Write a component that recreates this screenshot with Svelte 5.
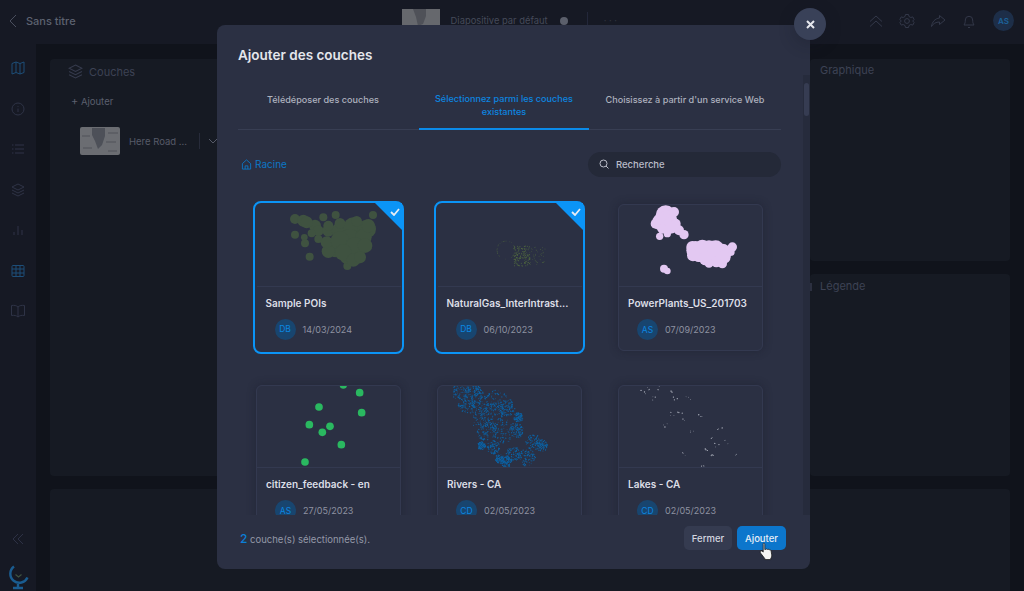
<script>
  // small seeded generator so the scattered map dots stay put between runs
  function rng(seed) {
    let s = seed;
    return () => {
      s = (s * 16807) % 2147483647;
      return s / 2147483647;
    };
  }

  const scale = (list, dx, dy) =>
    list.map(([x, y, r]) => ({ x: x / 3 - dx, y: y / 3 - dy, r: r / 3 }));

  const poi = scale(
    [
      [165, 75, 15], [190, 80, 18], [250, 70, 12], [287, 63, 12], [399, 63, 12],
      [165, 122, 12], [193, 130, 10], [195, 148, 12], [209, 188, 12], [322, 216, 12],
      [225, 95, 18], [200, 85, 18], [235, 110, 16], [265, 110, 18], [300, 110, 25],
      [340, 100, 30], [380, 105, 28], [330, 140, 35], [290, 160, 30], [265, 172, 20],
      [350, 185, 25], [320, 190, 20], [235, 135, 12], [370, 130, 25], [260, 145, 18],
      [300, 140, 28], [345, 160, 30], [375, 155, 22], [300, 88, 16], [350, 82, 16],
      [385, 95, 20], [265, 95, 15], [310, 175, 25], [340, 198, 20], [215, 118, 12],
      [360, 190, 18]
    ],
    13, 6
  );

  const plants = scale(
    [
      [200, 70, 30], [205, 85, 30], [185, 90, 25], [225, 60, 15], [170, 95, 15],
      [215, 100, 25], [240, 115, 15], [255, 128, 14], [182, 133, 11], [205, 125, 11],
      [190, 110, 15], [230, 95, 15], [290, 175, 28], [330, 175, 30], [330, 190, 32],
      [300, 182, 28], [370, 190, 25], [370, 180, 25], [400, 165, 14], [300, 190, 20],
      [340, 200, 20], [370, 215, 14], [330, 215, 12], [395, 180, 12], [280, 165, 18],
      [282, 190, 18], [310, 165, 22], [350, 170, 25], [375, 195, 20], [320, 200, 20],
      [352, 210, 16], [195, 230, 12], [205, 237, 10]
    ],
    16, 8
  );

  const feedback = scale(
    [
      [310, 33, 11], [359, 56, 11.5], [237, 99, 11.5], [365, 116, 11.5], [208, 152, 11.5],
      [270, 157, 11.5], [247, 175, 11.5], [304, 212, 11.5], [195, 264, 11.5]
    ],
    13, 7
  );

  function gasDots() {
    const r = rng(77);
    const dots = [];
    for (let i = 0; i < 120; i++) {
      dots.push({ x: 80 + r() * 16, y: 46 + r() * 20, r: 0.5 });
    }
    for (let i = 0; i < 50; i++) {
      dots.push({ x: 90 + r() * 21, y: 47 + r() * 18, r: 0.4 });
    }
    // the dotted rings on the west side
    for (let i = 0; i < 36; i++) {
      const a = r() * Math.PI * 2;
      dots.push({ x: 72 + Math.cos(a) * 9, y: 50 + Math.sin(a) * 9, r: 0.35 });
    }
    return dots;
  }

  function riverDots() {
    const r = rng(4242);
    const clusters = [
      [665, 55, 28], [700, 45, 24], [680, 90, 26], [720, 80, 30], [770, 80, 32], [720, 130, 32],
      [760, 120, 36], [800, 100, 26], [740, 170, 30], [790, 170, 36], [760, 220, 20], [830, 170, 22],
      [880, 205, 24], [905, 215, 18], [860, 250, 26], [800, 265, 16], [820, 240, 22], [725, 215, 12],
      [835, 130, 14], [780, 255, 14]
    ];
    const dots = [];
    for (const [cx, cy, spread] of clusters) {
      for (let i = 0; i < 90; i++) {
        const a = r() * Math.PI * 2;
        const d = Math.sqrt(r()) * spread;
        dots.push({
          x: (cx + Math.cos(a) * d) / 3 - 194,
          y: (cy + Math.sin(a) * d) / 3 - 7,
          r: 0.3 + r() * 0.45
        });
      }
    }
    return dots;
  }

  function lakeDots() {
    const r = rng(913);
    const spots = [
      [130, 55], [145, 45], [165, 75], [180, 42], [212, 50], [225, 75], [265, 75], [215, 120],
      [240, 120], [250, 135], [300, 125], [275, 170], [195, 155], [340, 190], [378, 205], [350, 215],
      [405, 245], [320, 228], [340, 243], [250, 243], [310, 270], [360, 165]
    ];
    const dots = [];
    for (const [cx, cy] of spots) {
      for (let i = 0; i < 3; i++) {
        dots.push({
          x: (cx + (r() - 0.5) * 14) / 3 - 15,
          y: (cy + (r() - 0.5) * 14) / 3 - 7,
          r: 0.3 + r() * 0.4
        });
      }
    }
    return dots;
  }

  const cards = [
    { name: "Sample POIs", who: "DB", date: "14/03/2024", on: true, dots: poi, color: "#3f5240" },
    { name: "NaturalGas_InterIntrast...", who: "DB", date: "06/10/2023", on: true, dots: gasDots(), color: "#50683f" },
    { name: "PowerPlants_US_201703", who: "AS", date: "07/09/2023", on: false, dots: plants, color: "#e3c8f2" },
    { name: "citizen_feedback - en", who: "AS", date: "27/05/2023", on: false, dots: feedback, color: "#2ab860" },
    { name: "Rivers - CA", who: "CD", date: "02/05/2023", on: false, dots: riverDots(), color: "#0c62a4" },
    { name: "Lakes - CA", who: "CD", date: "02/05/2023", on: false, dots: lakeDots(), color: "#b4b8c4" }
  ];

  const tabs = [
    { label: "Télédéposer des couches", width: 170 },
    { label: "Sélectionnez parmi les couches existantes", width: 170, active: true },
    { label: "Choisissez à partir d'un service Web", width: 192 }
  ];
</script>

<div class="app">
  <header class="topbar">
    <svg class="back" width="10" height="14" viewBox="0 0 10 14"><path d="M8 1 2 7l6 6" /></svg>
    <span class="doc-title">Sans titre</span>
    <div class="slide">
      <svg class="slide-thumb" width="38" height="20" viewBox="0 0 38 20">
        <rect width="38" height="20" fill="#66686d" />
        <path d="M11 0h13v7l-3 8-5 2-2-9z" fill="#4f5158" />
      </svg>
      <span>Diapositive par défaut</span>
      <i class="slide-dot"></i>
      <i class="slide-sep"></i>
      <span class="slide-more">· · ·</span>
    </div>
    <div class="top-actions">
      <svg width="16" height="16" viewBox="0 0 16 16"><path d="M2 8.500 8 3l6 5.500M2 13.500 8 8l6 5.500" /></svg>
      <svg width="16" height="16" viewBox="0 0 16 16"><path d="M6.500 1.500h3l.5 2 1.800 1 2-.6 1.300 2.600-1.400 1.500 1.400 1.500-1.300 2.600-2-.6-1.800 1-.5 2h-3l-.5-2-1.800-1-2 .6L.9 9.500 2.300 8 .9 6.500l1.300-2.600 2 .6 1.800-1z" /><circle cx="8" cy="8" r="2.400" /></svg>
      <svg width="16" height="16" viewBox="0 0 16 16"><path d="M9.500 2.500 15 7l-5.500 4.500V9C6 9 3 10.500 1.500 13.500 2 9 5 5.500 9.500 5z" /></svg>
      <svg width="16" height="16" viewBox="0 0 16 16"><path d="M3 12c1-1.500 1.300-2.500 1.300-5a3.700 3.700 0 0 1 7.400 0c0 2.500.3 3.500 1.300 5zM7 14.500h2" /></svg>
      <span class="top-avatar">AS</span>
    </div>
  </header>

  <div class="main">
    <nav class="sidebar">
      <div class="side-icons">
        <svg class="blue" width="14" height="14" viewBox="0 0 14 14"><path d="M1 2.500 5 1l4 1.500L13 1v10.500L9 13l-4-1.500L1 13zM5 1v10.500M9 2.500V13" /></svg>
        <svg width="14" height="14" viewBox="0 0 14 14"><circle cx="7" cy="7" r="6" /><path d="M7 6.500V10M7 4v.8" /></svg>
        <svg width="14" height="14" viewBox="0 0 14 14"><path d="M1 3h1.500M4 3h9M1 7h1.500M4 7h9M1 11h1.500M4 11h9" /></svg>
        <svg width="14" height="14" viewBox="0 0 14 14"><path d="M7 1 13 4 7 7 1 4zM1 7l6 3 6-3M1 10l6 3 6-3" /></svg>
        <svg width="14" height="14" viewBox="0 0 14 14"><path d="M3 12V9M7 12V3M11 12V7" /></svg>
        <svg class="blue" width="14" height="14" viewBox="0 0 14 14"><rect x="1" y="1.500" width="12" height="11" rx="1" /><path d="M1 5h12M1 9h12M5 1.500v11M9 1.500v11" /></svg>
        <svg width="16" height="14" viewBox="0 0 16 14"><path d="M8 3C6.500 1.500 4 1 1.500 1.500v10C4 11 6.500 11.500 8 13c1.500-1.500 4-2 6.500-1.500v-10C12 1 9.500 1.500 8 3zM8 3v10" /></svg>
      </div>
      <div class="side-foot">
        <svg width="12" height="12" viewBox="0 0 12 12"><path d="M6 1 1 6l5 5M11 1 6 6l5 5" /></svg>
        <svg class="logo" width="22" height="26" viewBox="0 0 22 26">
          <path d="M7 2.500a9 9 0 1 0 13.500 11" />
          <path d="M11 20v3M6 24h10" />
          <path class="logo-tick" d="m8.500 10.500 3 2.500 3-2.500" />
        </svg>
      </div>
    </nav>

    <div class="content">
      <section class="panel layers">
        <div class="layers-head">
          <svg width="15" height="15" viewBox="0 0 14 14"><path d="M7 1 13 4 7 7 1 4zM1 7l6 3 6-3M1 10l6 3 6-3" /></svg>
          <h2>Couches</h2>
        </div>
        <div class="layers-add"><b>+</b> <span>Ajouter</span></div>
        <div class="layer-row">
          <svg class="layer-thumb" width="40" height="28" viewBox="0 0 40 28">
            <rect width="40" height="28" rx="2" fill="#6b6d72" />
            <path d="M12 1h13v8l-3 9-4 4-3-8-3-6z" fill="#4d5058" />
            <path d="M2 9h8M28 6h10M3 21h9M26 15h10M28 24h9" stroke="#515359" stroke-width="1.200" fill="none" />
          </svg>
          <span class="layer-name">Here Road ...</span>
          <i class="layer-sep"></i>
          <svg class="layer-chev" width="10" height="8" viewBox="0 0 10 8"><path d="m1 2 4 4 4-4" /></svg>
        </div>
      </section>
      <div class="side-panels">
        <section class="panel"><h2>Graphique</h2></section>
        <section class="panel legend"><i class="grip"></i><h2>Légende</h2></section>
      </div>
      <section class="panel wide"></section>
    </div>
  </div>

  <div class="modal">
    <h1>Ajouter des couches</h1>

    <div class="scroll">
      <div class="scroll-body">
        <div class="tabs">
          {#each tabs as tab}
            <div class="tab" class:active={tab.active} style="width: {tab.width}px">{tab.label}</div>
          {/each}
        </div>

        <div class="crumbs">
          <div class="root">
            <svg width="11" height="11" viewBox="0 0 12 12"><path d="M1.500 11V5L6 1l4.500 4v6zM4.500 11V7.500h3V11" /></svg>
            Racine
          </div>
          <div class="search">
            <svg width="10" height="10" viewBox="0 0 10 10"><circle cx="4.500" cy="4.500" r="3.500" /><path d="m7 7 2.500 2.500" /></svg>
            Recherche
          </div>
        </div>

        <div class="grid">
          {#each cards as card}
            <article class="card" class:on={card.on}>
              <div class="card-inner">
                <svg class="thumb" viewBox="4 4 143 82" width="143" height="82">
                  {#each card.dots as d}
                    <circle cx={d.x} cy={d.y} r={d.r} fill={card.color} />
                  {/each}
                </svg>
                <div class="card-info">
                  <div class="card-name">{card.name}</div>
                  <div class="card-meta">
                    <span class="avatar">{card.who}</span>
                    <span>{card.date}</span>
                  </div>
                </div>
              </div>
              {#if card.on}
                <div class="corner">
                  <svg width="10" height="8" viewBox="0 0 10 8"><path d="m1 4 3 3 5-6" /></svg>
                </div>
              {/if}
            </article>
          {/each}
        </div>
      </div>
      <div class="scrollbar"><div class="scroll-thumb"></div></div>
    </div>

    <footer class="modal-foot">
      <div class="count"><b>2</b> couche(s) sélectionnée(s).</div>
      <div class="buttons">
        <button class="btn">Fermer</button>
        <button class="btn primary">Ajouter</button>
      </div>
    </footer>

    <button class="close" aria-label="Fermer">
      <svg width="9" height="9" viewBox="0 0 9 9"><path d="m1 1 7 7M8 1 1 8" /></svg>
    </button>

    <svg class="cursor" width="15" height="19" viewBox="0 0 15 19">
      <path d="M4.500 1.200c.8 0 1.300.6 1.300 1.400v5l.9-.2c.5-.5 1.400-.4 1.800.1.600-.4 1.500-.2 1.800.4.700-.3 1.600.1 1.800.9l.6 4c.2 1.500-.2 2.700-1 3.800v1H5.800v-1L2.300 12c-.7-.9-1.200-1.700-1-2.400.3-.8 1.300-.9 2-.3l.9.800V2.600c0-.8 0-1.400.3-1.400z" />
    </svg>
  </div>
</div>

<style>
  :global(body) {
    margin: 0;
    background: #10131b;
  }

  .app {
    position: relative;
    display: flex;
    flex-direction: column;
    width: 1024px;
    height: 591px;
    overflow: hidden;
    background: #10131b;
    font-family: Inter, "Liberation Sans", sans-serif;
    color: #c9ccd6;
  }

  .app svg {
    fill: none;
    stroke: currentColor;
    stroke-width: 1;
  }

  .topbar {
    display: flex;
    align-items: center;
    flex: 0 0 44px;
    padding: 0 10px 3px 8px;
    background: #161924;
    color: #565b6b;
    box-sizing: border-box;
  }

  .back {
    color: #4a4f5e;
  }

  .doc-title {
    margin-left: 8px;
    font-size: 11px;
    font-weight: 500;
    color: #5d6270;
  }

  .slide {
    display: flex;
    align-items: center;
    margin-left: 326px;
    font-size: 9.400px;
    color: #454a59;
  }

  .app .slide-thumb {
    margin-right: 11px;
    margin-top: -4px;
    stroke: none;
  }

  .slide-dot {
    width: 8px;
    height: 8px;
    margin-left: 12px;
    border-radius: 50%;
    background: #5b5f6b;
  }

  .slide-sep {
    width: 1px;
    height: 18px;
    margin: 0 16px 0 19px;
    background: #23273a;
  }

  .slide-more {
    color: #30343f;
  }

  .top-actions {
    display: flex;
    align-items: center;
    gap: 15px;
    margin-left: auto;
    color: #333849;
  }

  .top-avatar {
    display: grid;
    place-items: center;
    width: 21px;
    height: 21px;
    margin-left: 1px;
    border-radius: 50%;
    background: #1d2e48;
    color: #1c6199;
    font-size: 8px;
    font-weight: 600;
  }

  .main {
    display: flex;
    flex: 1;
    min-height: 0;
  }

  .sidebar {
    display: flex;
    flex-direction: column;
    justify-content: space-between;
    align-items: center;
    flex: 0 0 36px;
    padding: 17px 0 1px;
    background: #161924;
    box-sizing: border-box;
    color: #2e3346;
  }

  .side-icons {
    display: flex;
    flex-direction: column;
    align-items: center;
    gap: 26.500px;
  }

  .side-icons .blue {
    color: #1d4e78;
  }

  .side-foot {
    display: flex;
    flex-direction: column;
    align-items: center;
    gap: 19px;
    color: #2d3145;
  }

  .app .logo {
    color: #1a5c90;
    stroke-width: 2.400;
  }

  .app .logo-tick {
    color: #3f5240;
    stroke-width: 1.200;
  }

  .content {
    display: grid;
    grid-template-columns: 1fr 200px;
    grid-template-rows: 417px 1fr;
    gap: 13px;
    flex: 1;
    padding: 15px 14px 0;
    min-width: 0;
  }

  .panel {
    border-radius: 4px;
    background: #161a23;
  }

  .panel h2 {
    margin: 0;
    padding: 4px 10px;
    font-size: 11px;
    font-weight: 400;
    color: #3d4254;
  }

  .legend {
    position: relative;
    padding-top: 1px;
  }

  .grip {
    position: absolute;
    top: 9px;
    left: 0;
    width: 2px;
    height: 8px;
    background: #2c3040;
  }

  .wide {
    grid-column: 1 / 3;
    border-radius: 4px 4px 0 0;
  }

  .layers {
    padding-left: 18px;
  }

  .layers-head {
    display: flex;
    align-items: center;
    gap: 6px;
    height: 25px;
    color: #363b4d;
  }

  .layers .layers-head h2 {
    padding: 0;
    color: #3d4254;
  }

  .layers-add {
    margin: 10px 0 0 3px;
    font-size: 9.500px;
    color: #5b5f6d;
  }

  .layers-add b {
    font-size: 11px;
    font-weight: 400;
  }

  .layer-row {
    display: flex;
    align-items: center;
    margin: 19px 0 0 12px;
    font-size: 9.500px;
    color: #565a68;
  }

  .app .layer-thumb {
    stroke: none;
  }

  .layer-name {
    margin-left: 9px;
  }

  .layer-sep {
    width: 1px;
    height: 16px;
    margin: 0 8px 0 12px;
    background: #272b3a;
  }

  .layer-chev {
    color: #565a68;
  }

  .side-panels {
    display: flex;
    flex-direction: column;
    gap: 13px;
  }

  .side-panels .panel {
    flex: 1;
  }

  .modal {
    position: absolute;
    top: 25px;
    left: 217px;
    display: flex;
    flex-direction: column;
    width: 593px;
    height: 544px;
    border-radius: 8px;
    background: #2b3043;
  }

  h1 {
    flex: 0 0 50px;
    margin: 0;
    padding: 22px 0 0 21px;
    box-sizing: border-box;
    font-size: 13.500px;
    line-height: 17px;
    font-weight: 600;
    color: #e4e6ec;
  }

  .scroll {
    display: flex;
    flex: 1;
    min-height: 0;
  }

  .scroll-body {
    flex: 1;
    min-width: 0;
    padding: 0 22px 0 21px;
    overflow: hidden;
  }

  .scrollbar {
    flex: 0 0 7px;
    padding-top: 8px;
    background: #262b3c;
  }

  .scroll-thumb {
    width: 5px;
    height: 33px;
    margin: 0 auto;
    border-radius: 3px;
    background: #363c52;
  }

  .tabs {
    display: flex;
    height: 44px;
    margin-top: 10px;
    border-bottom: 1px solid #383e53;
  }

  .tab {
    display: flex;
    align-items: center;
    justify-content: center;
    padding: 0 12px 16px;
    box-sizing: border-box;
    margin-bottom: -1px;
    font-size: 9.100px;
    line-height: 13px;
    font-weight: 500;
    text-align: center;
    color: #aeb2bf;
  }

  .tab.active {
    margin-left: 11px;
    padding-bottom: 4px;
    border-bottom: 2px solid #0b8ae8;
    color: #0c86e0;
  }

  .crumbs {
    display: flex;
    align-items: center;
    justify-content: space-between;
    margin-top: 21px;
    height: 26px;
  }

  .root {
    display: flex;
    align-items: center;
    gap: 3px;
    padding-left: 3px;
    font-size: 10px;
    color: #0c77c6;
  }

  .search {
    display: flex;
    align-items: center;
    gap: 7px;
    width: 193px;
    height: 25px;
    padding-left: 11px;
    box-sizing: border-box;
    border-radius: 13px;
    background: #242938;
    font-size: 9.500px;
    font-weight: 500;
    color: #b9bcc8;
  }

  .grid {
    display: grid;
    grid-template-columns: repeat(3, 151px);
    column-gap: 30px;
    row-gap: 28px;
    margin: 24px 0 0 15px;
  }

  .card {
    position: relative;
    height: 153px;
    padding: 3px;
    box-sizing: border-box;
    border-radius: 8px;
  }

  .card.on {
    padding: 0.500px;
    border: 2.500px solid #0b94f6;
  }

  .card-inner {
    display: flex;
    flex-direction: column;
    height: 100%;
    box-sizing: border-box;
    border: 1px solid #333950;
    border-radius: 6px;
    overflow: hidden;
    box-shadow: 0 0 8px rgba(24, 27, 40, 0.45);
  }

  .card.on .card-inner {
    border-color: transparent;
    box-shadow: none;
  }

  .app .thumb {
    display: block;
    flex: 0 0 82px;
    margin-top: -1px;
    stroke: none;
  }

  .corner {
    position: absolute;
    top: 0;
    right: 0;
    width: 27px;
    height: 27px;
    clip-path: polygon(0 0, 100% 0, 100% 100%);
    background: #0b94f6;
  }

  .app .corner svg {
    position: absolute;
    top: 5px;
    right: 2px;
    color: #e8edf4;
    stroke-width: 1.800;
  }

  .card-info {
    padding: 9px 0 0 9px;
    border-top: 1px solid #333950;
  }

  .card-name {
    font-size: 10px;
    line-height: 14px;
    font-weight: 600;
    color: #dcdee6;
    white-space: nowrap;
  }

  .card-meta {
    display: flex;
    align-items: center;
    gap: 7px;
    margin: 9px 0 0 9px;
    font-size: 9px;
    color: #8e92a1;
  }

  .avatar {
    display: grid;
    place-items: center;
    width: 21px;
    height: 21px;
    border-radius: 50%;
    background: #18456f;
    color: #0c86e0;
    font-size: 8.500px;
  }

  .modal-foot {
    display: flex;
    align-items: center;
    justify-content: space-between;
    flex: 0 0 54px;
    padding: 0 24px 8px 23px;
    box-sizing: border-box;
  }

  .count {
    font-size: 9.500px;
    color: #9498a7;
  }

  .count b {
    font-size: 12px;
    font-weight: 500;
    color: #0c7fd6;
  }

  .buttons {
    display: flex;
    gap: 5px;
  }

  .btn {
    height: 24px;
    width: 48px;
    padding: 0;
    border: 0;
    border-radius: 5px;
    background: #353b50;
    font-family: inherit;
    font-size: 9.500px;
    font-weight: 500;
    color: #d4d7e0;
  }

  .btn.primary {
    width: 49px;
    background: #0c76cc;
    color: #e6eef7;
  }

  .close {
    position: absolute;
    top: -17px;
    right: -16px;
    display: grid;
    place-items: center;
    width: 32px;
    height: 32px;
    padding: 0;
    border: 0;
    border-radius: 50%;
    background: #394158;
    color: #e6e8ee;
    box-shadow: 0 4px 16px rgba(20, 24, 36, 0.3);
  }

  .app .close svg {
    stroke-width: 2;
  }

  .app .cursor {
    position: absolute;
    left: 542px;
    top: 517px;
    fill: #f4f4f4;
    stroke: #1a1a1a;
    stroke-width: 0.800;
  }
</style>
